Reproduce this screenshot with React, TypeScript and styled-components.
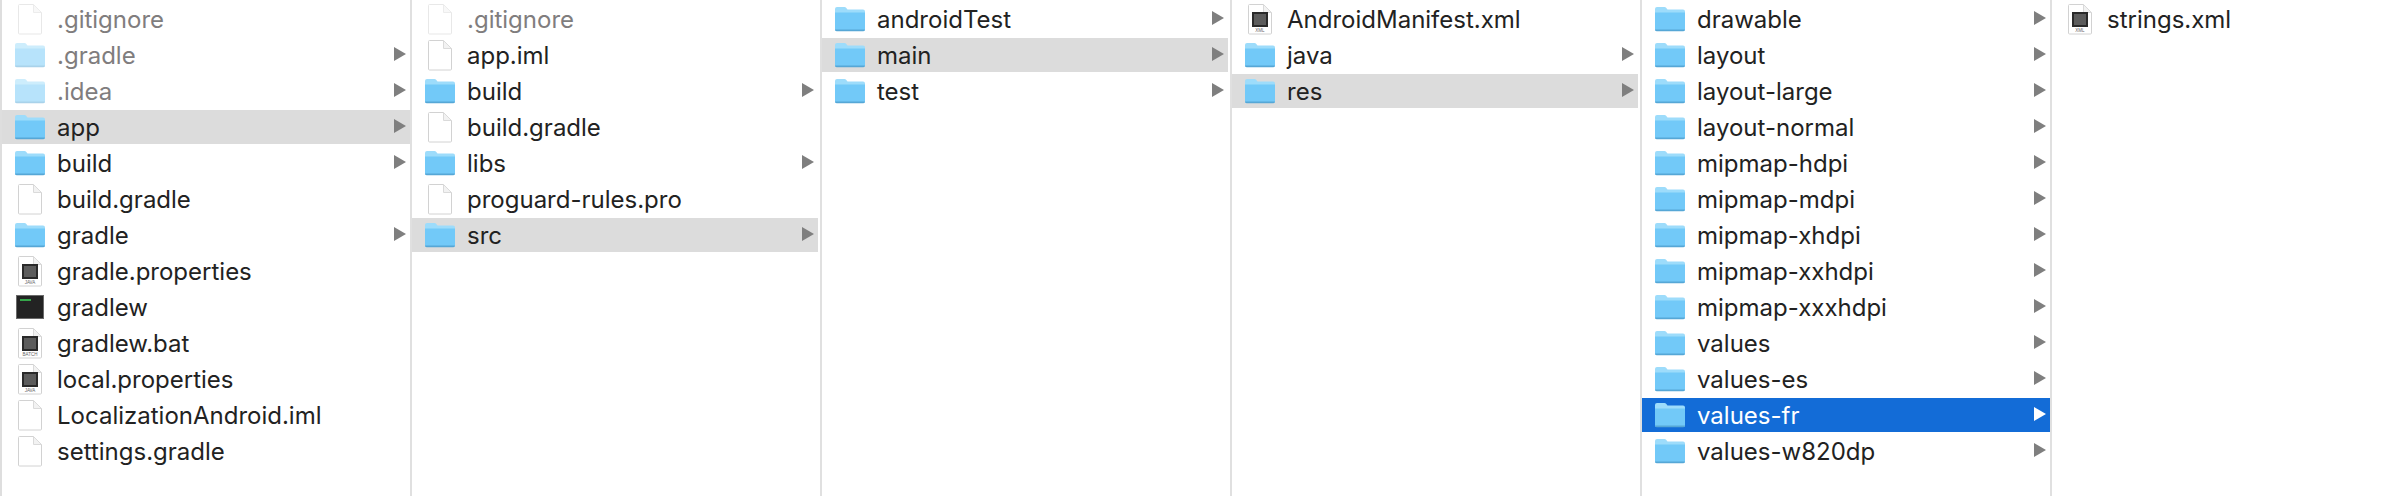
import React from 'react';
import styled, { createGlobalStyle } from 'styled-components';

type IconKind = 'folder' | 'file' | 'doc' | 'term';
interface Entry { name: string; icon: IconKind; label?: string; dim?: boolean; chevron?: boolean; state?: 'active' | 'selected'; }

const f = (name: string, state?: Entry['state'], dim?: boolean): Entry => ({ name, icon: 'folder', chevron: true, state, dim });
const p = (name: string, dim?: boolean): Entry => ({ name, icon: 'file', dim });
const d = (name: string, label: string): Entry => ({ name, icon: 'doc', label });

const columns: { gutter: number; entries: Entry[] }[] = [
  { gutter: 0, entries: [p('.gitignore', true), f('.gradle', undefined, true), f('.idea', undefined, true), f('app', 'active'), f('build'), p('build.gradle'), f('gradle'), d('gradle.properties', 'JAVA'), { name: 'gradlew', icon: 'term' }, d('gradlew.bat', 'BATCH'), d('local.properties', 'JAVA'), p('LocalizationAndroid.iml'), p('settings.gradle')] },
  { gutter: 2, entries: [p('.gitignore', true), p('app.iml'), f('build'), p('build.gradle'), f('libs'), p('proguard-rules.pro'), f('src', 'active')] },
  { gutter: 2, entries: [f('androidTest'), f('main', 'active'), f('test')] },
  { gutter: 2, entries: [d('AndroidManifest.xml', 'XML'), f('java'), f('res', 'active')] },
  { gutter: 0, entries: [f('drawable'), f('layout'), f('layout-large'), f('layout-normal'), f('mipmap-hdpi'), f('mipmap-mdpi'), f('mipmap-xhdpi'), f('mipmap-xxhdpi'), f('mipmap-xxxhdpi'), f('values'), f('values-es'), f('values-fr', 'selected'), f('values-w820dp')] },
  { gutter: 0, entries: [d('strings.xml', 'XML')] },
];

const Global = createGlobalStyle`
  html, body { margin: 0; padding: 0; background: #fff; }
  #root { width: 2396px; height: 496px; overflow: hidden; }
`;

const Browser = styled.div`
  display: flex;
  width: 2396px;
  height: 496px;
  padding-left: 2px;
  box-sizing: border-box;
  background: #fff;
  font-family: "Inter", "Liberation Sans", sans-serif;
  font-size: 24px;
  color: #222;
  box-shadow: inset 2px 0 0 #dedede;
`;

const Column = styled.div<{ $last?: boolean }>`
  flex: ${p => (p.$last ? '1 1 0' : '0 0 410px')};
  display: flex;
  flex-direction: column;
  gap: 2px;
  padding: 2px ${p => (p.$last ? 0 : 2)}px 0 0;
  box-sizing: border-box;
  height: 100%;
  min-width: 0;
  box-shadow: ${p => (p.$last ? 'none' : 'inset -2px 0 0 #e0e0e0')};
`;

const Row = styled.div<{ $state?: Entry['state']; $dim?: boolean; $gutter: number }>`
  display: flex;
  align-items: center;
  flex: 0 0 34px;
  height: 34px;
  padding: 0 4px 0 13px;
  margin-right: ${p => p.$gutter}px;
  background: ${p => (p.$state === 'active' ? '#dcdcdc' : p.$state === 'selected' ? '#136cd7' : 'transparent')};
  color: ${p => (p.$state === 'selected' ? '#fff' : p.$dim ? '#807d7e' : '#222')};
`;

const IconSlot = styled.span<{ $dim?: boolean }>`
  flex: 0 0 30px;
  width: 30px;
  height: 34px;
  display: flex;
  align-items: center;
  justify-content: center;
  opacity: ${p => (p.$dim ? 0.5 : 1)};
`;

const Name = styled.span`
  flex: 1;
  margin-left: 12px;
  white-space: nowrap;
`;

const Chevron = styled.svg`
  flex: 0 0 12px;
  display: block;
  margin-top: -2px;
`;

const FolderIcon = () => (
  <svg width="30" height="26" viewBox="0 0 30 26">
    <path d="M0 3a2 2 0 0 1 2-2h7.5a2 2 0 0 1 1.4.6L12.5 3.4H28a2 2 0 0 1 2 2V23a2 2 0 0 1-2 2H2a2 2 0 0 1-2-2z" fill="#9ddcfb" />
    <path d="M0 6.5h30V23a2 2 0 0 1-2 2H2a2 2 0 0 1-2-2z" fill="#72c9f8" />
    <path d="M0 23.4h30V23.6a1.6 1.6 0 0 1-1.6 1.6H1.6A1.6 1.6 0 0 1 0 23.6z" fill="#56a7d6" />
  </svg>
);

const PlainIcon = ({ children }: { children?: React.ReactNode }) => (
  <svg width="24" height="31" viewBox="0 0 24 31">
    <path d="M.5 1.5a1 1 0 0 1 1-1H15.5L23.5 8.5V29a1 1 0 0 1-1 1H1.5a1 1 0 0 1-1-1z" fill="#fff" stroke="#d2d2d2" />
    <path d="M15.5 .5V8.5h8z" fill="#f2f2f2" stroke="#dadada" />
    {children}
  </svg>
);

const DocIcon = ({ label }: { label: string }) => (
  <PlainIcon>
    <rect x="4" y="8" width="16" height="15" fill="#2a2a2a" />
    <rect x="6" y="10" width="12" height="11" fill="#5c5c5c" />
    <text x="12" y="28" textAnchor="middle" fontSize="4.5" fill="#666" fontFamily="Liberation Sans, sans-serif">{label}</text>
  </PlainIcon>
);

const TermIcon = () => (
  <svg width="28" height="24" viewBox="0 0 28 24">
    <rect x=".5" y=".5" width="27" height="23" fill="#232323" stroke="#6a6a6a" />
    <rect x="4" y="4" width="11" height="2" fill="#35a64a" />
  </svg>
);

const renderIcon = (e: Entry) => {
  if (e.icon === 'folder') return <FolderIcon />;
  if (e.icon === 'term') return <TermIcon />;
  if (e.icon === 'doc') return <DocIcon label={e.label ?? ''} />;
  return <PlainIcon />;
};

export default function App() {
  return (
    <>
      <Global />
      <Browser>
        {columns.map((col, i) => (
          <Column key={i} $last={i === columns.length - 1}>
            {col.entries.map(e => (
              <Row key={e.name} $state={e.state} $dim={e.dim} $gutter={col.gutter}>
                <IconSlot $dim={e.dim}>{renderIcon(e)}</IconSlot>
                <Name>{e.name}</Name>
                {e.chevron && (
                  <Chevron width="12" height="14" viewBox="0 0 12 14">
                    <path d="M0 0L12 7L0 14z" fill={e.state === 'selected' ? '#fff' : '#7f7f7f'} />
                  </Chevron>
                )}
              </Row>
            ))}
          </Column>
        ))}
      </Browser>
    </>
  );
}
